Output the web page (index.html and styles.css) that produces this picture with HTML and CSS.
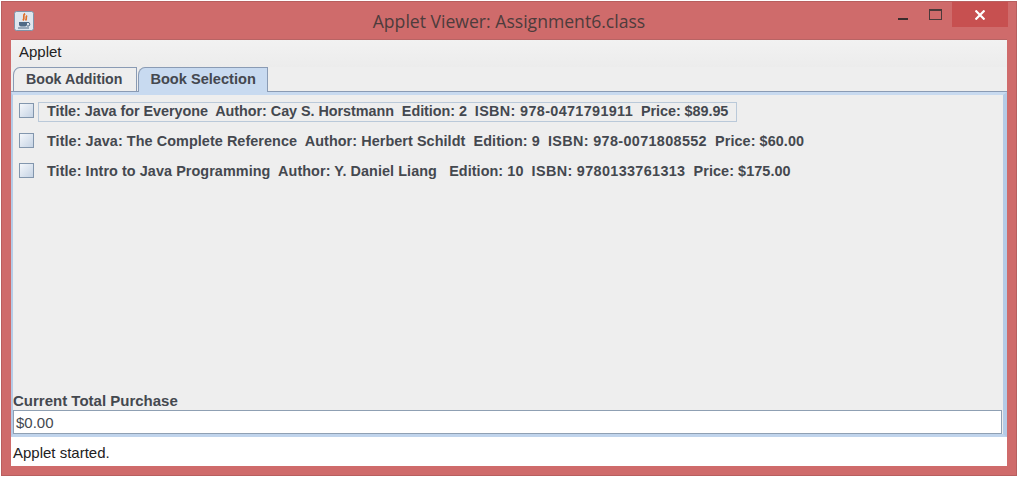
FILE: index.html
```html
<!DOCTYPE html>
<html lang="en">
<head>
    <meta charset="UTF-8">
    <title>Applet Viewer: Assignment6.class</title>
    <link rel="stylesheet" href="styles.css">
</head>
<body>

    <div class="window">
        <div class="title-bar">
            <svg class="app-icon" viewBox="0 0 20 20" width="20" height="20">
                <rect x="0.5" y="0.5" width="19" height="19" rx="2" fill="#dfe6ee" stroke="#7f93a8"/>
                <path d="M11 2.5 C8 5 11.5 6 9 9.5 M13 4.5 C11 6.5 13.5 7 11.5 9.5" fill="none" stroke="#e0702a" stroke-width="1.7"/>
                <path d="M5 11 H13 V13.5 Q13 15.5 11 15.5 H7 Q5 15.5 5 13.5 Z" fill="#4f6a86"/>
                <path d="M13 11.5 H15 Q16.8 13 15 15 H13" fill="none" stroke="#4f6a86" stroke-width="1"/>
                <path d="M4 17 H15" stroke="#4f6a86" stroke-width="1"/>
            </svg>
            <div class="title-text">Applet Viewer: Assignment6.class</div>
            <div class="window-buttons">
                <div class="min-btn"></div>
                <div class="max-btn"></div>
                <div class="close-btn">
                    <svg viewBox="0 0 10 10" width="10" height="10">
                        <path d="M0.5 0.5 L9.5 9.5 M9.5 0.5 L0.5 9.5" stroke="#fff" stroke-width="2.2"/>
                    </svg>
                </div>
            </div>
        </div>

        <div class="client">
            <div class="menu-bar">Applet</div>

            <div class="tabs">
                <div class="tab">Book Addition</div>
                <div class="tab active">Book Selection</div>
            </div>

            <div class="tab-panel">
                <div class="book-list">
                    <div class="book">
                        <span class="check"></span>
                        <span class="book-label focused">Title: Java for Everyone  Author: Cay S. Horstmann  Edition: 2  <span class="isbn">ISBN: 978-0471791911</span>  Price: $89.95</span>
                    </div>
                    <div class="book">
                        <span class="check"></span>
                        <span class="book-label">Title: Java: The Complete Reference  Author: Herbert Schildt  Edition: 9  <span class="isbn">ISBN: 978-0071808552</span>  Price: $60.00</span>
                    </div>
                    <div class="book">
                        <span class="check"></span>
                        <span class="book-label">Title: Intro to Java Programming  Author: Y. Daniel Liang   Edition: 10  <span class="isbn">ISBN: 9780133761313</span>  Price: $175.00</span>
                    </div>
                </div>
                <div class="total-label">Current Total Purchase</div>
                <div class="total-field">$0.00</div>
            </div>

            <div class="status-bar">Applet started.</div>
        </div>
    </div>

</body>
</html>
```

FILE: styles.css
```css
body {
    margin: 0;
    background-color: #ffffff;
    font-family: "Liberation Sans", Arial, sans-serif;
}

.window {
    width: 1016px;
    height: 475px;
    margin: 1px 0 0 1px;
    box-sizing: border-box;
    display: flex;
    flex-direction: column;
    padding: 0 9px 9px 9px;
    background-color: #cf6b6b;
    border: 1px solid #b85f5f;
}

.title-bar {
    height: 37px;
    flex-shrink: 0;
    display: flex;
    align-items: flex-start;
    position: relative;
}

.app-icon {
    margin: 9px 0 0 3px;
}

.title-text {
    position: absolute;
    left: 0;
    right: 0;
    top: 9px;
    text-align: center;
    font-family: "Open Sans", sans-serif;
    font-size: 17.6px;
    line-height: 20px;
    color: #4d3c3c;
}

.window-buttons {
    margin-left: auto;
    margin-right: -1px;
    display: flex;
    align-items: flex-start;
    position: relative;
}

.min-btn {
    width: 10px;
    height: 2px;
    margin: 16px 0 0 0;
    background-color: #3a2c2c;
}

.max-btn {
    width: 11px;
    height: 8px;
    margin: 7px 0 0 21px;
    border: 1px solid #4a3a3a;
    border-top-width: 2px;
}

.close-btn {
    width: 56px;
    height: 25px;
    margin-left: 10px;
    display: flex;
    align-items: center;
    justify-content: center;
    background-color: #c75050;
}

.client {
    flex: 1;
    display: flex;
    flex-direction: column;
    background-color: #eeeeee;
    border-top: 1px solid #b86464;
}

.menu-bar {
    height: 27px;
    flex-shrink: 0;
    box-sizing: border-box;
    padding: 3px 0 0 8px;
    font-size: 15px;
    line-height: 17px;
    color: #222222;
    background-image: linear-gradient(#f2f2f2, #ececec);
}

.tabs {
    height: 25px;
    flex-shrink: 0;
    display: flex;
    align-items: flex-end;
    padding-left: 2px;
    background-color: #eeeeee;
}

.tab {
    height: 25px;
    box-sizing: border-box;
    padding: 3px 14px 0 12px;
    font-size: 14.2px;
    font-weight: bold;
    line-height: 17px;
    color: #44484f;
    background-color: #eeeeee;
    border: 1px solid #8a9bb4;
    border-top-left-radius: 7px 8px;
}

.tab.active {
    position: relative;
    margin-left: 1px;
    padding: 3px 11px 0 11px;
    font-size: 14.6px;
    background-color: #c8daf0;
    border-bottom: none;
}

.tab-panel {
    flex: 1;
    min-height: 0;
    display: flex;
    flex-direction: column;
    padding: 7px 1px 0 0;
    background-color: #eeeeee;
    border-style: solid;
    border-width: 3px 4px 3px 2px;
    border-color: #c8daf0 #b5cbe6 #c0d4ec #b5cbe6;
    box-shadow: 0 -1px 0 #8a9bb4;
}

.book-list {
    flex: 1;
}

.book {
    height: 30px;
    display: flex;
    align-items: flex-start;
    padding-left: 6px;
}

.check {
    width: 15px;
    height: 15px;
    box-sizing: border-box;
    margin-top: 1px;
    margin-right: 4px;
    border: 1px solid #8296ad;
    background-image: linear-gradient(135deg, #f4f7fb, #c5d3e4);
}

.book-label {
    height: 20px;
    box-sizing: border-box;
    padding: 0 8px;
    border: 1px solid transparent;
    white-space: pre;
    font-size: 14.4px;
    font-weight: bold;
    line-height: 17px;
    letter-spacing: 0.07px;
    color: #44484f;
}

.book-label.focused {
    letter-spacing: -0.05px;
    border-color: #bac9d9;
}

.isbn {
    letter-spacing: 0.35px;
}

.total-label {
    font-size: 15px;
    font-weight: bold;
    line-height: 17px;
    color: #44484f;
}

.total-field {
    height: 24px;
    box-sizing: border-box;
    margin-top: 1px;
    padding: 3px 0 0 2px;
    font-size: 15px;
    line-height: 17px;
    color: #44484f;
    background-color: #ffffff;
    border: 1px solid #8fa0b3;
}

.status-bar {
    height: 29px;
    flex-shrink: 0;
    box-sizing: border-box;
    padding: 7px 0 0 2px;
    font-size: 15px;
    line-height: 17px;
    color: #222222;
    background-color: #ffffff;
}
```
